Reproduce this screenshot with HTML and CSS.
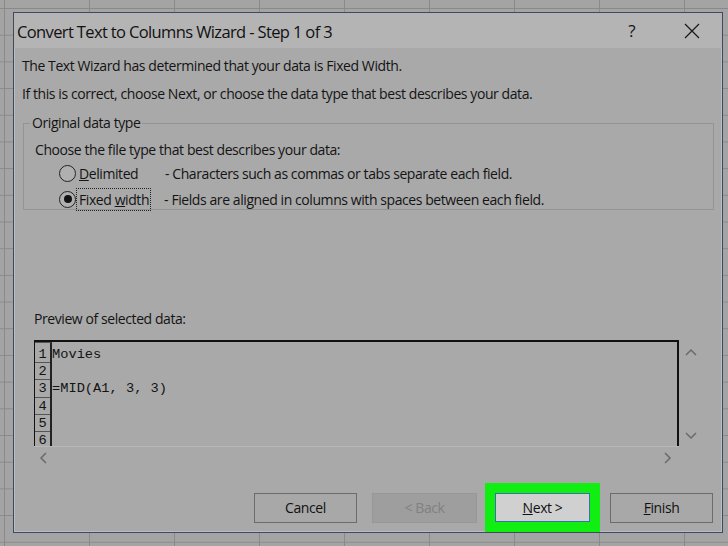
FILE: index.html
```html
<!DOCTYPE html>
<html>
<head>
<meta charset="utf-8">
<link rel="stylesheet" href="styles.css">
</head>
<body>
<div class="dialog">
  <div class="titlebar">
    <span class="title">Convert Text to Columns Wizard - Step 1 of 3</span>
    <span class="tb-btns">
      <span class="help">?</span>
      <svg class="close" width="16" height="16" viewBox="0 0 16 16"><path d="M1 1L15 15M15 1L1 15" stroke="#1a1a1a" stroke-width="1.3" fill="none"/></svg>
    </span>
  </div>
  <div class="content">
    <p class="line l1">The Text Wizard has determined that your data is Fixed Width.</p>
    <p class="line l2">If this is correct, choose Next, or choose the data type that best describes your data.</p>
    <fieldset class="group">
      <legend>Original data type</legend>
      <p class="choose">Choose the file type that best describes your data:</p>
      <div class="opt">
        <span class="radio"></span>
        <span class="optlabel"><u>D</u>elimited</span>
        <span class="optdesc">- Characters such as commas or tabs separate each field.</span>
      </div>
      <div class="opt">
        <span class="radio checked"></span>
        <span class="optlabel focus">Fixed <u>w</u>idth</span>
        <span class="optdesc">- Fields are aligned in columns with spaces between each field.</span>
      </div>
    </fieldset>
    <p class="preview-label">Preview of selected data:</p>
    <div class="preview-wrap">
      <div class="preview-main">
        <div class="preview">
          <div class="nums">
            <div class="num">1</div><div class="num">2</div><div class="num">3</div><div class="num">4</div><div class="num">5</div><div class="num">6</div>
          </div>
          <div class="data">
            <div class="row">Movies</div><div class="row"></div><div class="row">=MID(A1, 3, 3)</div><div class="row"></div><div class="row"></div><div class="row"></div>
          </div>
        </div>
        <div class="hscroll">
          <svg width="10" height="12" viewBox="0 0 10 12"><path d="M7 1L2 6L7 11" stroke="#6a6a6a" stroke-width="1.5" fill="none"/></svg>
          <svg width="10" height="12" viewBox="0 0 10 12"><path d="M3 1L8 6L3 11" stroke="#6a6a6a" stroke-width="1.5" fill="none"/></svg>
        </div>
      </div>
      <div class="vscroll">
        <svg width="12" height="10" viewBox="0 0 12 10"><path d="M1 7L6 2L11 7" stroke="#6a6a6a" stroke-width="1.5" fill="none"/></svg>
        <svg width="12" height="10" viewBox="0 0 12 10"><path d="M1 3L6 8L11 3" stroke="#6a6a6a" stroke-width="1.5" fill="none"/></svg>
      </div>
    </div>
    <div class="buttons">
      <button class="btn cancel">Cancel</button>
      <button class="btn disabled">&lt; Back</button>
      <span class="hl"><button class="btn primary"><u>N</u>ext &gt;</button></span>
      <button class="btn"><u>F</u>inish</button>
    </div>
  </div>
</div>
</body>
</html>
```

FILE: styles.css
```css
html, body {
  margin: 0;
  padding: 0;
}
body {
  width: 728px;
  height: 546px;
  overflow: hidden;
  background-color: #a4a4a4;
  background-image:
    linear-gradient(to right, #8a8a8a 1px, transparent 1px),
    linear-gradient(to bottom, #8a8a8a 1px, transparent 1px);
  background-size: 85px 26.7px;
  background-position: 4px 8px;
  font-family: "Open Sans", "Noto Sans", sans-serif;
  color: #141414;
}
.dialog {
  margin: 12px 0 0 13px;
  width: 708px;
  height: 519px;
  border: 1px solid #3d4b60;
  box-shadow: inset 0 0 0 1px #b8bcc4;
  background: #a9a9a9;
  display: flex;
  flex-direction: column;
}
.titlebar {
  height: 35px;
  background: #b4b4b4;
  display: flex;
  align-items: center;
  justify-content: space-between;
  padding: 0 0 0 3px;
  flex-shrink: 0;
}
.title {
  font-size: 16.5px;
  letter-spacing: -0.63px;
  color: #111;
  margin-top: 1px;
}
.tb-btns {
  display: flex;
  align-items: center;
}
.help {
  font-size: 17px;
  width: 20px;
  text-align: center;
  margin-right: 42px;
}
.close {
  margin-right: 22px;
}
.content {
  padding: 0 0 0 8px;
  flex: 1;
  display: flex;
  flex-direction: column;
  font-size: 14px;
  letter-spacing: -0.42px;
}
.line {
  margin: 0;
  height: 28px;
  line-height: 28px;
}
.l1 { margin-top: 4px; }
.group {
  margin: 7px 8px 0 1px;
  padding: 0 0 0 11px;
  border: 1px solid #949494;
  border-radius: 0;
  height: 95px;
  box-sizing: border-box;
}
.group legend {
  padding: 0 2px;
  margin-left: -5px;
  line-height: 16px;
}
.choose {
  margin: 9px 0 0 0;
  line-height: 20px;
}
.opt {
  display: flex;
  align-items: center;
  height: 26px;
  margin-left: 24px;
}
.radio {
  width: 17px;
  height: 17px;
  border: 1px solid #222;
  border-radius: 50%;
  box-sizing: border-box;
  background: #b0b0b0;
  margin-right: 2px;
  position: relative;
}
.radio.checked::after {
  content: "";
  position: absolute;
  left: 3.5px;
  top: 3.5px;
  width: 8px;
  height: 8px;
  border-radius: 50%;
  background: #111;
}
.optlabel {
  width: 86px;
  padding-left: 1px;
}
.optlabel.focus {
  outline: 1px dotted #222;
  outline-offset: 1px;
  width: auto;
  margin-right: 15px;
}
.preview-label {
  margin: 99px 0 0 12px;
  line-height: 20px;
}
.preview-wrap {
  display: flex;
  margin: 11px 0 0 12px;
}
.preview-main {
  width: 645px;
}
.preview {
  height: 106px;
  border-top: 2px solid #111;
  border-right: 2px solid #111;
  border-left: 1px solid #111;
  box-sizing: border-box;
  display: flex;
  overflow: hidden;
  font-family: "Liberation Mono", "Courier New", monospace;
  font-size: 13.7px;
  letter-spacing: 0;
  padding-top: 4px;
}
.nums {
  width: 15px;
  border-right: 2px solid #222;
  border-top: 1px solid #555;
  flex-shrink: 0;
  margin-top: -4px;
  padding-top: 3px;
}
.num {
  height: 17.2px;
  box-sizing: border-box;
  border-bottom: 1px solid #555;
  text-align: center;
  line-height: 18px;
}
.row {
  height: 17.2px;
  line-height: 18px;
  white-space: pre;
}
.hscroll {
  height: 22px;
  display: flex;
  justify-content: space-between;
  align-items: center;
  padding: 0 7px 0 5px;
  border-top: 1px solid #b8b8b8;
}
.vscroll {
  width: 24px;
  height: 106px;
  display: flex;
  flex-direction: column;
  justify-content: space-between;
  align-items: center;
  padding: 8px 0 6px;
  box-sizing: border-box;
}
.buttons {
  display: flex;
  align-items: center;
  margin: 14px 0 0 232px;
}
.btn {
  font-family: "Open Sans", "Noto Sans", sans-serif;
  font-size: 14px;
  letter-spacing: -0.42px;
  color: #111;
  width: 103px;
  height: 30px;
  background: #a8a8a8;
  border: 1px solid #6c6c6c;
  padding: 0;
  margin: 0;
  flex-shrink: 0;
}
.btn.cancel {
  margin-right: 15px;
}
.btn.disabled {
  width: 105px;
  background: #9e9e9e;
  border-color: #979797;
  color: #818181;
  margin-right: 8px;
}
.hl {
  background: #11ee11;
  padding: 10px;
  display: flex;
  margin: 0 10px 0 0;
  flex-shrink: 0;
}
.btn.primary {
  width: 95px;
  height: 29px;
  background: #d0d0d0;
  border: 1px solid #3a6fb0;
}
```
